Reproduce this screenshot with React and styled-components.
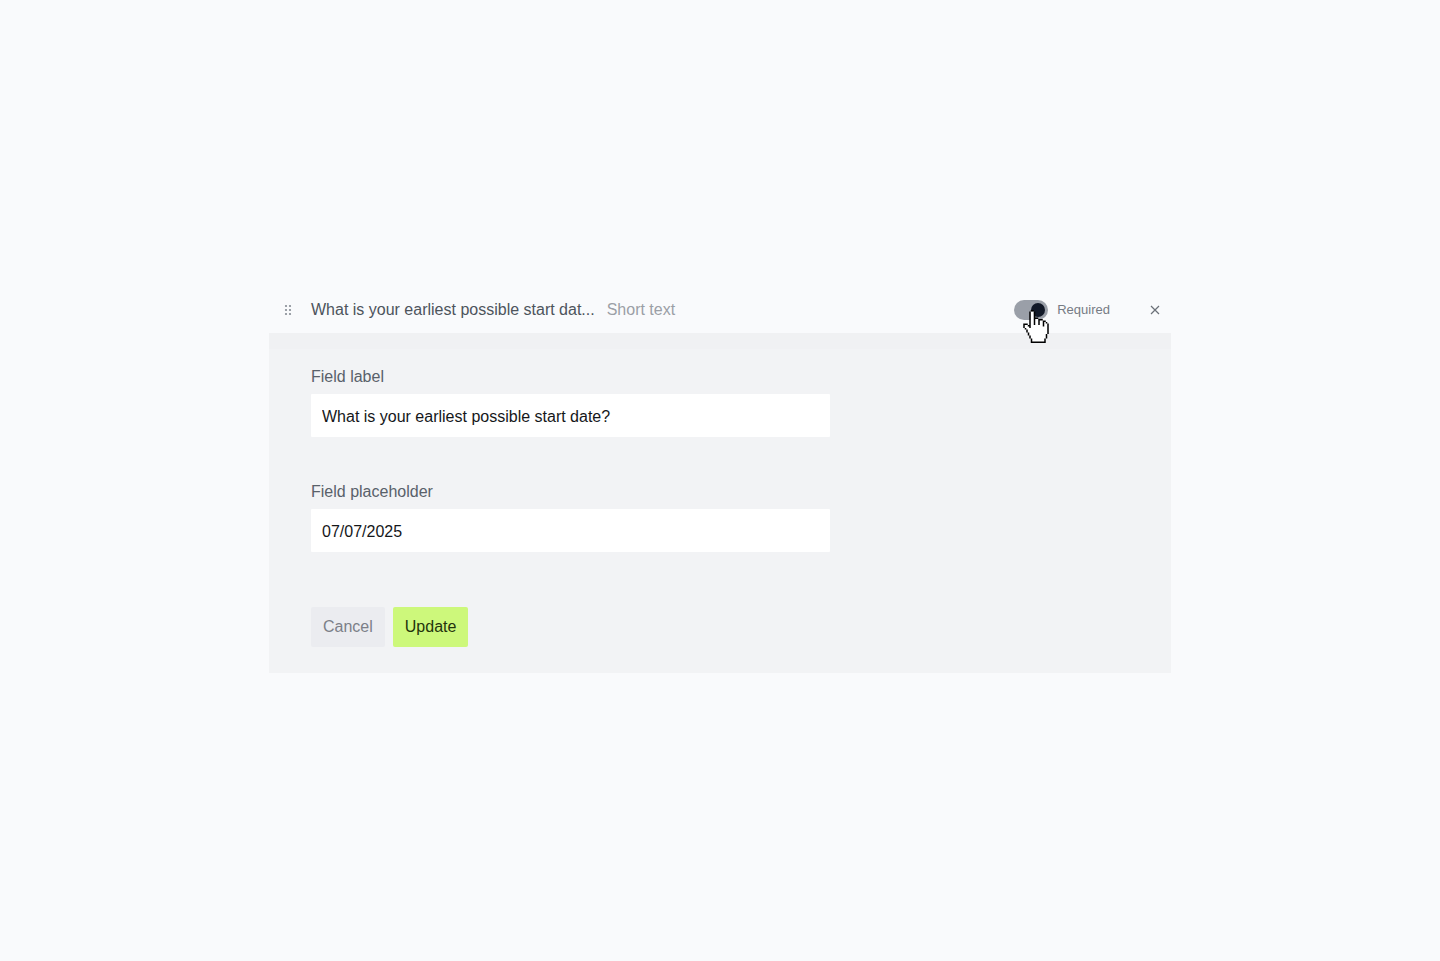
import React, { useState } from "react";
import styled, { createGlobalStyle } from "styled-components";

// # is outline, . is fill
const HAND = [
  "     ##          ",
  "    #..#         ",
  "    #..#         ",
  "    #..#         ",
  "    #..#         ",
  "    #..###       ",
  "    #..#..###    ",
  "    #..#..#..##  ",
  "    #..#..#..#.# ",
  "### #..#..#..#..#",
  "#..##........#..#",
  "#...#...........#",
  " #..............#",
  "  #.............#",
  "  #.............#",
  "   #............#",
  "   #...........# ",
  "    #..........# ",
  "    #..........# ",
  "     #........#  ",
  "     #........#  ",
  "     ##########  ",
];

const cells = (mark) =>
  HAND.flatMap((row, y) => [...row].map((cell, x) => (cell === mark ? `M${x} ${y}h1v1h-1z` : ""))).join("");

const App = () => {
  const [label, setLabel] = useState("What is your earliest possible start date?");
  const [placeholder, setPlaceholder] = useState("07/07/2025");
  const [required, setRequired] = useState(true);

  return (
    <Page>
      <GlobalStyle />
      <Card>
        <Header>
          <DragHandle type="button" aria-label="Reorder field">
            <svg width="8" height="12" viewBox="0 0 8 12" fill="currentColor">
              {[2, 6, 10].map((y) => (
                <React.Fragment key={y}>
                  <circle cx="2" cy={y} r="1.1" />
                  <circle cx="6" cy={y} r="1.1" />
                </React.Fragment>
              ))}
            </svg>
          </DragHandle>
          <Title>What is your earliest possible start dat...</Title>
          <FieldType>Short text</FieldType>
          <RequiredLabel>
            <Switch type="checkbox" role="switch" checked={required} onChange={(e) => setRequired(e.target.checked)} />
            Required
            <HandCursor width="26" height="33" viewBox="0 0 17 22" aria-hidden="true">
              <path d={cells(".")} fill="#fff" stroke="#fff" strokeWidth="0.3" />
              <path d={cells("#")} fill="#000" />
            </HandCursor>
          </RequiredLabel>
          <CloseButton type="button" aria-label="Remove field">
            <svg width="10" height="10" viewBox="0 0 10 10" fill="none" stroke="currentColor" strokeWidth="1.2">
              <path d="M1 1 L9 9 M9 1 L1 9" />
            </svg>
          </CloseButton>
        </Header>
        <Body>
          <Fields>
            <Field>
              <Label htmlFor="field-label">Field label</Label>
              <Input id="field-label" value={label} onChange={(e) => setLabel(e.target.value)} />
            </Field>
            <Field>
              <Label htmlFor="field-placeholder">Field placeholder</Label>
              <Input id="field-placeholder" value={placeholder} onChange={(e) => setPlaceholder(e.target.value)} />
            </Field>
          </Fields>
          <Actions>
            <Button type="button">Cancel</Button>
            <Button type="button" $primary>
              Update
            </Button>
          </Actions>
        </Body>
      </Card>
    </Page>
  );
};

const GlobalStyle = createGlobalStyle`
  * {
    box-sizing: border-box;
  }

  body {
    margin: 0;
    background: #f9fafc;
    font-family: "Liberation Sans", Arial, sans-serif;
    font-size: 16px;
    line-height: 24px;
    color: #4d545c;
  }

  button,
  input {
    font: inherit;
  }
`;

const Page = styled.main`
  display: flex;
  align-items: center;
  justify-content: center;
  min-height: 100vh;
`;

const Card = styled.section`
  width: 100%;
  max-width: 902px;
`;

const Header = styled.header`
  display: flex;
  align-items: center;
  padding: 10px 8px 11px 11px;
`;

const IconButton = styled.button`
  display: flex;
  align-items: center;
  justify-content: center;
  height: 16px;
  width: 16px;
  padding: 0;
  border: 0;
  background: none;
`;

const DragHandle = styled(IconButton)`
  margin-right: 15px;
  color: #858b93;
  cursor: grab;
`;

const CloseButton = styled(IconButton)`
  margin-left: 37px;
  color: #6b7078;
`;

const Title = styled.span`
  white-space: nowrap;
`;

const FieldType = styled.span`
  margin-left: 12px;
  color: #9b9fa6;
  white-space: nowrap;
`;

const RequiredLabel = styled.label`
  position: relative;
  display: flex;
  align-items: center;
  gap: 9px;
  margin-left: auto;
  font-size: 13px;
  color: #767b84;
`;

const Switch = styled.input`
  appearance: none;
  display: flex;
  justify-content: flex-end;
  align-items: center;
  width: 34px;
  height: 20px;
  margin: 0;
  padding: 3px;
  border-radius: 10px;
  background: #9a9fa8;

  &::before {
    content: "";
    width: 14px;
    height: 14px;
    border-radius: 50%;
    background: #111827;
  }

  &:not(:checked) {
    justify-content: flex-start;
  }
`;

const HandCursor = styled.svg`
  position: absolute;
  top: 12px;
  left: 9px;
  pointer-events: none;
`;

const Body = styled.div`
  padding: 32px 42px 26px;
  background: linear-gradient(#f0f1f3 16px, #f2f3f5 16px);
`;

const Fields = styled.div`
  display: grid;
  gap: 43px;
  max-width: 519px;
`;

const Field = styled.div`
  display: grid;
  gap: 5px;
`;

const Label = styled.label`
  color: #59616a;
`;

const Input = styled.input`
  width: 100%;
  height: 43px;
  padding: 2px 11px 0;
  border: 0;
  border-radius: 1px;
  background: #fff;
  color: #15171a;
`;

const Actions = styled.div`
  display: flex;
  gap: 8px;
  margin-top: 55px;
`;

const Button = styled.button`
  height: 40px;
  padding: 0 12px;
  border: 0;
  border-radius: 2px;
  background: ${(props) => (props.$primary ? "#cdf87b" : "#ebecf0")};
  color: ${(props) => (props.$primary ? "#24340c" : "#7c7f88")};
`;

export default App;
